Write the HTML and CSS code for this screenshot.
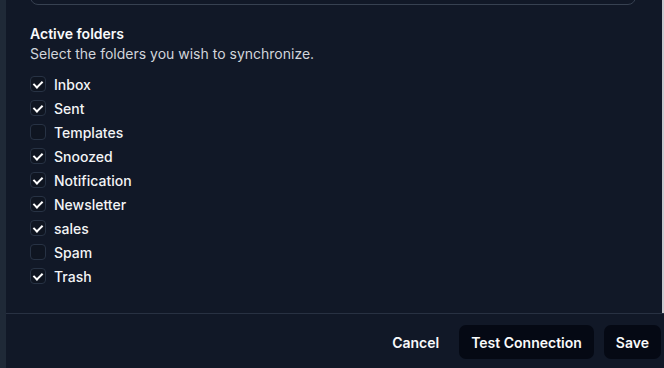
FILE: index.html
```html
<!DOCTYPE html>
<html lang="en">
<head>
    <meta charset="UTF-8">
    <meta name="viewport" content="width=device-width, initial-scale=1.0">
    <title>Folder sync</title>
    <link rel="stylesheet" href="styles.css">
</head>
<body>
    <div class="panel">
        <div class="scroll">
            <div class="content">
                <div class="field-input"></div>

                <div class="section">
                    <h3 class="section-title">Active folders</h3>
                    <p class="section-desc">Select the folders you wish to synchronize.</p>
                </div>

                <ul class="folders">
                    <li><label class="folder"><input type="checkbox" checked><span class="box"></span>Inbox</label></li>
                    <li><label class="folder"><input type="checkbox" checked><span class="box"></span>Sent</label></li>
                    <li><label class="folder"><input type="checkbox"><span class="box"></span>Templates</label></li>
                    <li><label class="folder"><input type="checkbox" checked><span class="box"></span>Snoozed</label></li>
                    <li><label class="folder"><input type="checkbox" checked><span class="box"></span>Notification</label></li>
                    <li><label class="folder"><input type="checkbox" checked><span class="box"></span>Newsletter</label></li>
                    <li><label class="folder"><input type="checkbox" checked><span class="box"></span>sales</label></li>
                    <li><label class="folder"><input type="checkbox"><span class="box"></span>Spam</label></li>
                    <li><label class="folder"><input type="checkbox" checked><span class="box"></span>Trash</label></li>
                </ul>
            </div>
            <div class="scrollbar"></div>
        </div>

        <div class="footer">
            <button class="btn btn-ghost">Cancel</button>
            <button class="btn btn-dark">Test Connection</button>
            <button class="btn btn-dark">Save</button>
        </div>
    </div>
</body>
</html>
```

FILE: styles.css
```css
* {
    box-sizing: border-box;
}
body {
    margin: 0;
    background-color: #1f2937;
    font-family: 'Inter', 'Noto Sans', sans-serif;
    color: #f3f4f6;
    overflow: hidden;
}
.panel {
    margin-left: 6px;
    height: 368px;
    background-color: #111827;
    display: flex;
    flex-direction: column;
}
.scroll {
    height: 313px;
    display: flex;
}
.content {
    flex: 1;
    padding: 0 26px 0 24px;
}
.scrollbar {
    width: 2px;
    background-color: #c9cacf;
}
.field-input {
    height: 36px;
    margin-top: -31px;
    border: 1px solid #374151;
    border-radius: 8px;
    background-color: #111827;
}
.section {
    margin-top: 19px;
}
.section-title {
    margin: 0;
    font-size: 14px;
    line-height: 20px;
    font-weight: 600;
    color: #f9fafb;
}
.section-desc {
    margin: 0;
    font-size: 14px;
    line-height: 20px;
    color: #d1d5db;
}
.folders {
    list-style: none;
    margin: 8px 0 0;
    padding: 0;
}
.folder {
    display: flex;
    align-items: center;
    gap: 8px;
    height: 24px;
    font-size: 14px;
    font-weight: 500;
    color: #f3f4f6;
}
.folder input {
    display: none;
}
.box {
    width: 16px;
    height: 16px;
    border: 1px solid #273244;
    border-radius: 4px;
    background-color: #0f1521;
    position: relative;
}
.folder input:checked + .box::after {
    content: "";
    position: absolute;
    left: 4px;
    top: 2px;
    width: 4px;
    height: 7px;
    border: solid #ffffff;
    border-width: 0 2px 2px 0;
    transform: rotate(45deg);
}
.footer {
    flex: 1;
    border-top: 1px solid #283142;
    display: flex;
    justify-content: flex-end;
    align-items: center;
    gap: 10px;
    padding: 2px 3px 0 0;
}
.btn {
    font-family: inherit;
    font-size: 14px;
    font-weight: 600;
    color: #f9fafb;
    height: 34px;
    padding: 0 12px;
    border: none;
    border-radius: 7px;
    background: transparent;
    cursor: pointer;
}
.btn-ghost {
    margin-right: -2px;
}
.btn-dark {
    background-color: #050914;
}
```
